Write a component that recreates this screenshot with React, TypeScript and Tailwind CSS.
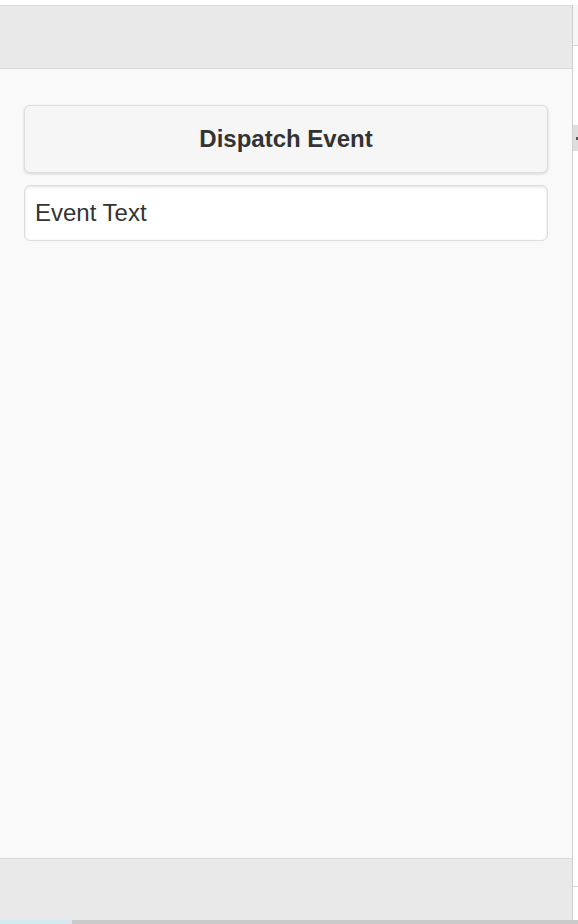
import React from 'react'

export default function App() {
  return (
    <div className="w-[578px] h-[924px] flex flex-col bg-white overflow-hidden" style={{ fontFamily: '"Liberation Sans", Arial, sans-serif' }}>
      <div className="h-[5px] bg-white shrink-0"></div>
      <div className="flex flex-1 min-h-0">
        <div className="w-[573px] flex flex-col border-r border-[#cfcfcf]">
          <header className="h-[64px] shrink-0 bg-[#e9e9e9] border-y border-[#dadada]"></header>
          <main className="flex-1 bg-[#f9f9f9] px-[24px] pt-[36px] flex flex-col gap-[12px]">
            <button className="h-[68px] w-[524px] rounded-[6px] border border-[#dddddd] bg-[#f6f6f6] shadow-[0_1px_3px_rgba(0,0,0,0.15)] text-[24px] font-bold text-[#333333]">
              Dispatch Event
            </button>
            <input
              className="h-[56px] w-[524px] rounded-[6px] border border-[#dddddd] bg-white px-[10px] text-[24px] text-[#333333] shadow-[inset_0_1px_3px_rgba(0,0,0,0.12)] outline-none placeholder:text-[#333333]"
              placeholder="Event Text"
            />
          </main>
          <footer className="h-[62px] shrink-0 bg-[#e9e9e9] border-t border-[#dadada]"></footer>
        </div>
        <div className="w-[5px] flex flex-col">
          <div className="h-[41px] bg-[#f6f6f6] border-b border-[#d4d4d4]"></div>
          <div className="h-[79px]"></div>
          <div className="h-[26px] bg-[#dedede] flex items-center justify-end">
            <div className="w-[2px] h-[3px] bg-[#555555]"></div>
          </div>
          <div className="flex-1"></div>
          <div className="h-[34px] border-t border-[#d4d4d4]"></div>
        </div>
      </div>
      <div className="h-[4px] shrink-0 flex">
        <div className="w-[72px] bg-[#d4e9f0]"></div>
        <div className="flex-1 bg-[#cacaca]"></div>
      </div>
    </div>
  )
}
